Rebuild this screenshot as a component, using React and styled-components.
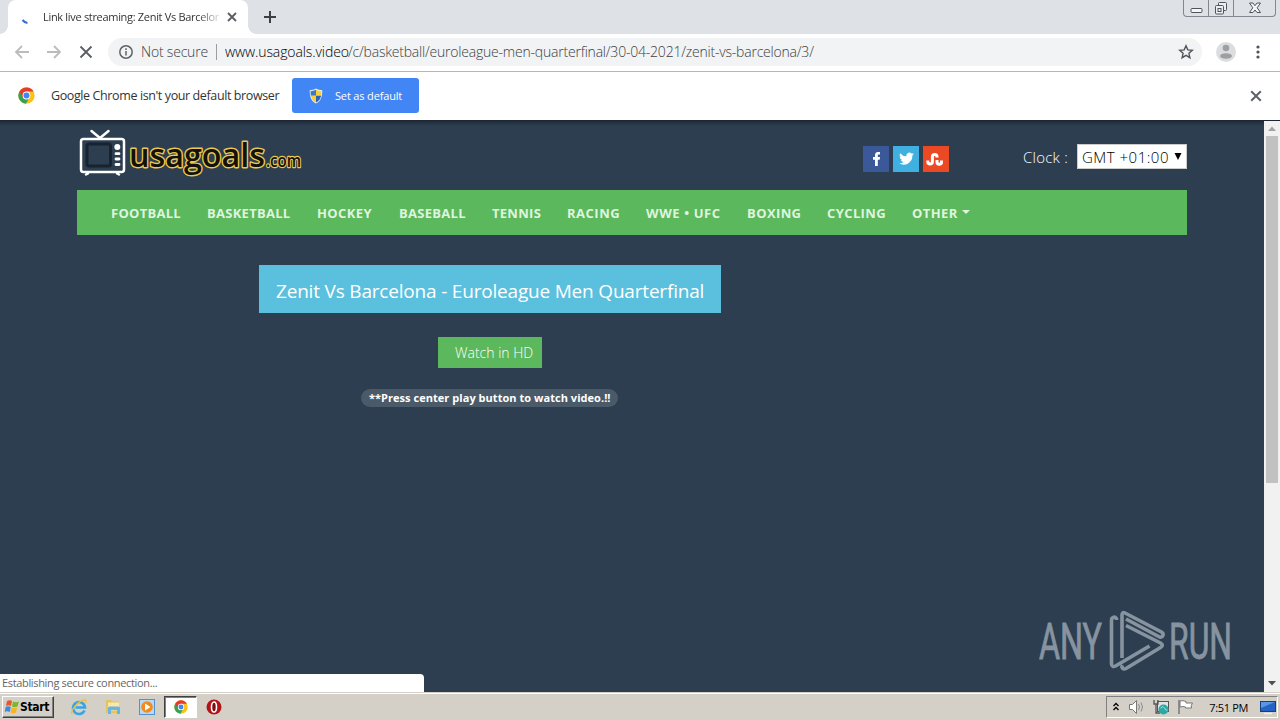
import React from "react";
import styled, { createGlobalStyle } from "styled-components";

const GlobalStyle = createGlobalStyle`
  * {
    box-sizing: border-box;
  }

  body {
    margin: 0;
    overflow: hidden;
    background: #2c3e50;
  }
`;

const Screen = styled.div`
  width: 1280px;
  height: 720px;
  display: flex;
  flex-direction: column;
  overflow: hidden;
  font-family: "Open Sans", "Noto Sans", sans-serif;
`;

const Text = styled.span`
  display: block;
  flex: none;
  white-space: nowrap;
  width: ${(props) => (props.$w ? `${props.$w}px` : "auto")};
  margin-left: ${(props) => props.$ml || 0}px;
  margin-right: ${(props) => props.$mr || 0}px;
  font-size: ${(props) => props.$size || 13}px;
  font-weight: ${(props) => props.$weight || 400};
  letter-spacing: ${(props) => props.$ls || 0}px;
  color: ${(props) => props.$color || "#333"};
`;

const TabStrip = styled.div`
  height: 34px;
  flex: none;
  display: flex;
  background: #dee1e6;
`;

const Tab = styled.div`
  position: relative;
  width: 240px;
  height: 34px;
  margin-left: 8px;
  padding: 0 11px 0 13px;
  display: flex;
  align-items: center;
  background: #fff;
  border-radius: 8px 8px 0 0;

  &::before,
  &::after {
    content: "";
    position: absolute;
    bottom: 0;
    width: 8px;
    height: 8px;
  }

  &::before {
    left: -8px;
    background: radial-gradient(circle at 0 0, transparent 7.5px, #fff 8px);
  }

  &::after {
    right: -8px;
    background: radial-gradient(circle at 100% 0, transparent 7.5px, #fff 8px);
  }
`;

const TabTitle = styled.div`
  width: 176px;
  margin: 0 8px 1px 14px;
  overflow: hidden;
  mask-image: linear-gradient(90deg, #000 155px, transparent 180px);
`;

const NewTab = styled.div`
  width: 44px;
  display: flex;
  align-items: center;
  justify-content: center;
`;

const WindowButtons = styled.div`
  height: 17px;
  margin: 0 4px 0 auto;
  display: flex;
  border: 1px solid #83878f;
  border-top: 0;
  border-radius: 0 0 4px 4px;
`;

const WindowButton = styled.div`
  width: ${(props) => props.$w}px;
  display: flex;
  align-items: center;
  justify-content: center;

  & + & {
    border-left: 1px solid #83878f;
  }
`;

const Toolbar = styled.div`
  height: 38px;
  flex: none;
  display: flex;
  align-items: center;
  padding: 0 20px 2px 14px;
  background: #fff;
  border-bottom: 1px solid #b4b6b9;
`;

const NavIcons = styled.div`
  display: flex;
  gap: 16px;
`;

const AddressBar = styled.div`
  width: 1094px;
  height: 28px;
  margin-left: 14px;
  padding: 0 8px 0 10px;
  display: flex;
  align-items: center;
  border-radius: 14px;
  background: #f1f3f4;
`;

const Separator = styled.div`
  width: 1px;
  height: 16px;
  margin: 0 8px;
  background: #9a9da1;
`;

const StarWrap = styled.div`
  margin-left: auto;
  display: flex;
`;

const ToolbarEnd = styled.div`
  margin-left: auto;
  display: flex;
  align-items: center;
  gap: 20px;
`;

const InfoBar = styled.div`
  height: 49px;
  flex: none;
  display: flex;
  align-items: center;
  padding: 0 18px 1px;
  background: #fff;
  border-bottom: 1px solid #1c2733;
`;

const DefaultButton = styled.div`
  width: 127px;
  height: 35px;
  margin-left: 13px;
  padding-left: 17px;
  display: flex;
  align-items: center;
  gap: 12px;
  border-radius: 3px;
  background: #4285f4;
`;

const CloseWrap = styled.div`
  margin: 1px 0 0 auto;
  display: flex;
`;

const Viewport = styled.div`
  position: relative;
  height: 571px;
  flex: none;
  display: flex;
`;

const Page = styled.div`
  flex: 1;
  padding: 0 77px;
  background: linear-gradient(#1f2c3a, #2c3e50 5px);
`;

const Header = styled.header`
  height: 69px;
  display: flex;
`;

const Socials = styled.div`
  display: flex;
  gap: 4px;
  margin: 25px 74px 0 auto;
`;

const Social = styled.div`
  width: 26px;
  height: 26px;
  display: flex;
  background: ${(props) => props.$bg};
`;

const Clock = styled.div`
  height: 25px;
  margin-top: 23px;
  display: flex;
  align-items: center;
`;

const Select = styled.div`
  width: 110px;
  height: 25px;
  padding: 0 4px;
  display: flex;
  align-items: center;
  justify-content: space-between;
  background: #fff;
  border: 1px solid #ccc;
`;

const NavBar = styled.nav`
  height: 45px;
  padding-left: 34px;
  display: flex;
  align-items: center;
  background: #5cb85c;
`;

const NavItem = styled.div`
  width: ${(props) => props.$w}px;
  margin-right: 26px;
  font-size: 13px;
  font-weight: 700;
  letter-spacing: ${(props) => props.$ls || 0.28}px;
  white-space: nowrap;
  color: #dff5df;
`;

const Caret = styled.span`
  display: inline-block;
  margin-left: 4px;
  vertical-align: 4px;
  border: 4px solid transparent;
  border-top-color: #dff5df;
  border-bottom: 0;
`;

const Content = styled.main`
  width: 826px;
  padding-top: 30px;
  display: flex;
  flex-direction: column;
  align-items: center;
`;

const Title = styled.h1`
  width: 462px;
  height: 48px;
  margin: 0 0 24px;
  padding: 4px 0 0 17px;
  display: flex;
  align-items: center;
  background: #5bc0de;
`;

const WatchButton = styled.div`
  width: 104px;
  height: 31px;
  margin-bottom: 21px;
  padding-left: 17px;
  display: flex;
  align-items: center;
  background: #5cb85c;
`;

const Hint = styled.div`
  width: 257px;
  height: 18px;
  margin-right: 1px;
  padding: 0 0 1px 8px;
  display: flex;
  align-items: center;
  border-radius: 9px;
  background: #4b5a69;
`;

const ScrollBar = styled.div`
  width: 16px;
  display: flex;
  flex-direction: column;
  align-items: center;
  background: #f1f1f1;
`;

const ScrollThumb = styled.div`
  width: 12px;
  height: 347px;
  margin-bottom: auto;
  background: #c1c1c1;
`;

const StatusBubble = styled.div`
  position: absolute;
  left: 0;
  bottom: 0;
  width: 424px;
  height: 18px;
  padding: 0 0 1px 2px;
  display: flex;
  align-items: center;
  background: #fff;
  border-radius: 0 4px 0 0;
`;

const Watermark = styled.svg`
  position: absolute;
  left: 1034px;
  top: 486px;
`;

const TaskBar = styled.div`
  flex: 1;
  display: flex;
  align-items: flex-start;
  padding: 3px 2px 0;
  background: #d4d0c8;
  border-top: 1px solid #d4d0c8;
  box-shadow: inset 0 1px 0 #fff;
`;

const StartButton = styled.div`
  width: 52px;
  height: 22px;
  padding-left: 1px;
  display: flex;
  align-items: center;
  border: 1px solid;
  border-color: #fff #404040 #404040 #fff;
  box-shadow: inset -1px -1px 0 #808080;
  font-family: "DejaVu Sans Condensed", "DejaVu Sans", sans-serif;
`;

const QuickLaunch = styled.div`
  display: flex;
  align-items: center;
  margin-left: 8px;
`;

const LaunchItem = styled.div`
  width: ${(props) => props.$w || 34}px;
  height: 22px;
  display: flex;
  align-items: center;
  justify-content: center;
  background: ${(props) => (props.$active ? "#fff" : "transparent")};
  border: ${(props) => (props.$active ? "1px solid" : "0")};
  border-color: #404040 #fff #fff #404040;
  box-shadow: ${(props) => (props.$active ? "inset 1px 1px 0 #808080" : "none")};
`;

const Tray = styled.div`
  width: 172px;
  height: 22px;
  margin-left: auto;
  padding: 0 1px 0 5px;
  display: flex;
  align-items: center;
  border: 1px solid;
  border-color: #808080 #fff #fff #808080;
`;

const TrayIcons = styled.div`
  display: flex;
  align-items: center;
  gap: 7px;
  margin-right: auto;
`;

const Cross = ({ size, color, stroke = 2 }) => (
  <svg width={size} height={size} viewBox="0 0 10 10">
    <path d="M1 1l8 8M9 1l-8 8" stroke={color} strokeWidth={stroke} fill="none" />
  </svg>
);

const Arrow = ({ flip }) => (
  <svg width="16" height="16" viewBox="0 0 16 16">
    <path
      d="M15 8H2M8 2L2 8l6 6"
      transform={flip ? "matrix(-1 0 0 1 16 0)" : undefined}
      stroke="#babcbe"
      strokeWidth="1.8"
      fill="none"
    />
  </svg>
);

const ChromeLogo = ({ size }) => (
  <svg width={size} height={size} viewBox="0 0 48 48">
    <circle cx="24" cy="24" r="23" fill="#fbc116" />
    <path d="M24 24L4.1 12.5A23 23 0 0 0 22 47l10-17z" fill="#34a353" />
    <path d="M4.1 12.5A23 23 0 0 1 43.9 13H24L14 29.5z" fill="#e33b2e" />
    <circle cx="24" cy="24" r="11" fill="#fff" />
    <circle cx="24" cy="24" r="8.5" fill="#4285f4" />
  </svg>
);

const Shield = () => (
  <svg width="14" height="16" viewBox="0 0 14 16">
    <path d="M7 .5c2 1.2 4 1.7 6.3 1.7 0 6-1 10.5-6.3 13.3C1.7 12.7.7 8.2.7 2.2 3 2.2 5 1.7 7 .5z" fill="#e8edf2" />
    <path d="M7 1.8v6H1.9C1.7 6.3 1.6 5 1.6 3.2 3.6 3.1 5.4 2.6 7 1.8z" fill="#3c78c8" />
    <path d="M7 1.8v6h5.1c.2-1.5.3-2.8.3-4.6C10.4 3.1 8.6 2.6 7 1.8z" fill="#f7d038" />
    <path d="M7 7.8v6.7c-3-1.6-4.5-3.7-5.1-6.7z" fill="#f7d038" />
    <path d="M7 7.8v6.7c3-1.6 4.5-3.7 5.1-6.7z" fill="#2d62b5" />
  </svg>
);

const SiteLogo = () => (
  <svg width="230" height="69" viewBox="77 121 230 69">
    <g fill="none" stroke="#fff" strokeWidth="2.5" strokeLinecap="round" strokeLinejoin="round">
      <path d="M91.5 131l8.5 7 8.5-7" />
      <rect x="81" y="139" width="43" height="33" rx="2.5" />
      <path d="M88 173.5l-2 1M117 173.5l2 1" />
    </g>
    <rect x="87" y="144" width="23.5" height="22" rx="2" fill="#2c3e50" stroke="#172331" strokeWidth="3" />
    <circle cx="117.3" cy="147" r="3" fill="#fff" />
    <path d="M116 153.7h3M116 159h3M116 164.5h3" stroke="#fff" strokeWidth="2.8" strokeLinecap="round" />
    <g
      fill="#141208"
      stroke="#edc94f"
      strokeWidth="2.8"
      strokeLinejoin="round"
      paintOrder="stroke"
      fontFamily="Open Sans, Noto Sans, sans-serif"
      fontWeight="600"
    >
      <text x="129" y="167" fontSize="33" textLength="136" lengthAdjust="spacingAndGlyphs">usagoals</text>
      <text x="266" y="167" fontSize="18" strokeWidth="2.4" textLength="35" lengthAdjust="spacingAndGlyphs">.com</text>
    </g>
  </svg>
);

const navItems = [
  { label: "FOOTBALL", width: 70 },
  { label: "BASKETBALL", width: 84 },
  { label: "HOCKEY", width: 56, ls: 0.4 },
  { label: "BASEBALL", width: 67 },
  { label: "TENNIS", width: 49 },
  { label: "RACING", width: 53, ls: 0.5 },
  { label: "WWE • UFC", width: 75, ls: 0.6 },
  { label: "BOXING", width: 54, ls: 0.4 },
  { label: "CYCLING", width: 59, ls: 0.4 },
  { label: "OTHER", width: 60, ls: 0.4, caret: true },
];

const BrowserTop = () => (
  <>
    <TabStrip>
      <Tab>
        <svg width="8" height="16" viewBox="0 0 8 16">
          <path d="M1.5 11q2 2.500 5 3" stroke="#3b6fd0" strokeWidth="2.2" fill="none" />
        </svg>
        <TabTitle>
          <Text $size={11} $ls={-0.31}>Link live streaming: Zenit Vs Barcelona</Text>
        </TabTitle>
        <Cross size={10} color="#5a5d61" stroke={1.8} />
      </Tab>
      <NewTab>
        <svg width="12" height="12" viewBox="0 0 12 12">
          <path d="M6 0v12M0 6h12" stroke="#3c4043" strokeWidth="2" />
        </svg>
      </NewTab>
      <WindowButtons>
        <WindowButton $w={24}>
          <svg width="13" height="17" viewBox="0 0 13 17">
            <rect x="1" y="8.5" width="11" height="4" rx="1" fill="#f5f6f8" stroke="#50545c" />
          </svg>
        </WindowButton>
        <WindowButton $w={25}>
          <svg width="14" height="17" viewBox="0 0 14 17">
            <g fill="#eceef1" stroke="#50545c">
              <rect x="4.5" y="2.5" width="8" height="8" rx="1" />
              <rect x="1.5" y="5.5" width="8" height="8.5" rx="1" />
              <rect x="4" y="8.5" width="3" height="3" />
            </g>
          </svg>
        </WindowButton>
        <WindowButton $w={42}>
          <svg width="14" height="17" viewBox="0 0 14 17">
            <path
              d="M1.5 3H5l2 2.700L9 3h3.500L9.200 7.800l3.300 4.700H9L7 10l-2 2.500H1.500l3.300-4.700z"
              fill="#f5f6f8"
              stroke="#50545c"
            />
          </svg>
        </WindowButton>
      </WindowButtons>
    </TabStrip>
    <Toolbar>
      <NavIcons>
        <Arrow />
        <Arrow flip />
        <svg width="16" height="16" viewBox="0 0 16 16">
          <path d="M2.5 2.5l11 11M13.5 2.5l-11 11" stroke="#5a5d61" strokeWidth="1.8" />
        </svg>
      </NavIcons>
      <AddressBar>
        <svg width="16" height="16" viewBox="0 0 16 16">
          <circle cx="8" cy="8" r="6.2" fill="none" stroke="#5f6368" strokeWidth="1.5" />
          <path d="M8 7v4.500M8 4.300v1.600" stroke="#5f6368" strokeWidth="1.5" />
        </svg>
        <Text $size={14} $weight={300} $color="#3c4043" $w={67} $ml={7} $ls={-0.2}>Not secure</Text>
        <Separator />
        <Text $size={14} $weight={300} $color="#000" $w={123} $ls={-0.1}>www.usagoals.video</Text>
        <Text $size={14} $weight={300} $color="#3c4043" $ls={-0.21}>
          /c/basketball/euroleague-men-quarterfinal/30-04-2021/zenit-vs-barcelona/3/
        </Text>
        <StarWrap>
          <svg width="16" height="16" viewBox="0 0 16 16">
            <path
              d="M8 1.8l1.8 4.1 4.5.4-3.4 3 1 4.4L8 11.400l-3.900 2.300 1-4.400-3.400-3 4.500-.4z"
              fill="none"
              stroke="#50545a"
              strokeWidth="1.4"
            />
          </svg>
        </StarWrap>
      </AddressBar>
      <ToolbarEnd>
        <svg width="20" height="20" viewBox="0 0 20 20">
          <circle cx="10" cy="10" r="10" fill="#dcdddf" />
          <circle cx="10" cy="6" r="3.3" fill="#9d9fa2" />
          <ellipse cx="10" cy="14" rx="6" ry="2.8" fill="#9d9fa2" />
        </svg>
        <svg width="4" height="16" viewBox="0 0 4 16">
          <g fill="#505358">
            <circle cx="2" cy="3" r="1.6" />
            <circle cx="2" cy="8" r="1.6" />
            <circle cx="2" cy="13" r="1.6" />
          </g>
        </svg>
      </ToolbarEnd>
    </Toolbar>
    <InfoBar>
      <ChromeLogo size={17} />
      <Text $size={12.5} $w={228} $ml={16} $ls={-0.39}>Google Chrome isn't your default browser</Text>
      <DefaultButton>
        <Shield />
        <Text $size={11} $color="#fff" $ls={-0.16}>Set as default</Text>
      </DefaultButton>
      <CloseWrap>
        <Cross size={12} color="#5f6368" stroke={1.7} />
      </CloseWrap>
    </InfoBar>
  </>
);

const SitePage = () => (
  <Page>
    <Header>
      <SiteLogo />
      <Socials>
        <Social $bg="#3b5998">
          <svg width="26" height="26" viewBox="0 0 26 26">
            <path d="M12 20v-6.300H10V11h2V9.200C12 6.800 13.200 6 15 6h2v2.500h-1.400c-.7 0-.8.400-.8 1V11h2.200l-.3 2.700h-1.900V20z" fill="#fff" />
          </svg>
        </Social>
        <Social $bg="#3fb0e0">
          <svg width="26" height="26" viewBox="0 0 26 26">
            <path
              transform="translate(5.500 5) scale(.67)"
              d="M23 4.600a9 9 0 0 1-2.600.7 4.500 4.500 0 0 0 2-2.500 9 9 0 0 1-2.900 1.100 4.500 4.500 0 0 0-7.700 4.100A12.800 12.800 0 0 1 2.500 3.300a4.500 4.500 0 0 0 1.400 6 4.500 4.500 0 0 1-2-.6c0 2.200 1.500 4.100 3.600 4.500a4.500 4.500 0 0 1-2 .1 4.500 4.500 0 0 0 4.200 3.100A9 9 0 0 1 1 18.300a12.800 12.800 0 0 0 19.700-11.400A9 9 0 0 0 23 4.600z"
              fill="#fff"
            />
          </svg>
        </Social>
        <Social $bg="#eb4924">
          <svg width="26" height="26" viewBox="0 0 26 26">
            <path
              d="M4.8 14.500v1.300a2.300 2.300 0 0 0 4.600 0v-5a2.300 2.300 0 0 1 4.600 0v.7M14 14v2a2.200 2.200 0 0 0 4.500 0v-1.500"
              fill="none"
              stroke="#fff"
              strokeWidth="3"
            />
          </svg>
        </Social>
      </Socials>
      <Clock>
        <Text $size={15} $weight={300} $color="#fff" $w={54} $ls={0.25}>Clock :</Text>
        <Select>
          <Text $size={15} $color="#000" $weight={300} $ls={0.5}>GMT +01:00</Text>
          <svg width="8" height="8" viewBox="0 0 8 8">
            <path d="M.5 0h7L4 7z" fill="#000" />
          </svg>
        </Select>
      </Clock>
    </Header>
    <NavBar>
      {navItems.map((item) => (
        <NavItem key={item.label} $w={item.width} $ls={item.ls}>
          {item.label}
          {item.caret && <Caret />}
        </NavItem>
      ))}
    </NavBar>
    <Content>
      <Title>
        <Text $size={19} $color="#fff" $ls={-0.19}>Zenit Vs Barcelona - Euroleague Men Quarterfinal</Text>
      </Title>
      <WatchButton>
        <Text $size={14} $color="#fff" $weight={300}>Watch in HD</Text>
      </WatchButton>
      <Hint>
        <Text $size={11} $color="#fff" $weight={700} $ls={0.04}>**Press center play button to watch video.!!</Text>
      </Hint>
    </Content>
  </Page>
);

const AnyRun = () => (
  <Watermark width="204" height="66" viewBox="1034 607 204 66">
    <g
      fill="#8794a0"
      stroke="#8794a0"
      strokeWidth="0.9"
      fontFamily="Roboto, sans-serif"
      fontSize="50"
    >
      <text x="1039" y="659" textLength="63" lengthAdjust="spacingAndGlyphs">ANY</text>
      <text x="1169" y="659" textLength="63" lengthAdjust="spacingAndGlyphs">RUN</text>
    </g>
    <g fill="none" stroke="#8794a0" strokeWidth="3.6" strokeLinejoin="round">
      <path d="M1116.5 620v-1.500c-2-2.500-5-1-5 2V664c0 2.500 2 3 4 2l34-20" />
      <path d="M1122 658v-43c0-2 1-3 3-2l36.500 19c3 2 1.500 6-2 5L1126 619" />
      <path d="M1126 625.500l34.500 17.500c2.500 1.500 2.500 3 0 4.500L1126 668.500c-3 1.500-5-1-3.500-3.500" />
    </g>
  </Watermark>
);

const SystemBar = () => (
  <TaskBar>
    <StartButton>
      <svg width="16" height="16" viewBox="0 0 16 16">
        <path d="M3 2q3-1.500 5 0L7 7q-2.500-1.500-5 0z" fill="#e8562a" />
        <path d="M9 2.500q3 1.500 6 0L13.500 7.500q-3 1.500-5.500 0z" fill="#7db728" />
        <path d="M1.7 8q2.500-1.500 5 0l-1 5q-3-1.500-5 0z" fill="#3c8ad8" />
        <path d="M7.7 8.500q2.500 1.500 5.500 0l-1.200 5q-2.500 1.500-5.500 0z" fill="#f6b420" />
      </svg>
      <Text $size={12} $weight={700} $color="#000" $ls={-0.3}>Start</Text>
    </StartButton>
    <QuickLaunch>
      <LaunchItem>
        <svg width="18" height="18" viewBox="0 0 18 18">
          <path d="M14.5 12.500A6 6 0 1 1 15 9.500H5.500" fill="none" stroke="#38a5e3" strokeWidth="2.6" />
          <path d="M2.5 16C-1.500 15 8 2.500 14.500 2c2-.1 2 1.500 1.200 3" fill="none" stroke="#ecc23c" strokeWidth="1.3" />
        </svg>
      </LaunchItem>
      <LaunchItem>
        <svg width="16" height="16" viewBox="0 0 16 16">
          <path d="M1 1h5l1 1.500h7V14H1z" fill="#e3c462" />
          <path d="M3 3.500h11v8H3z" fill="#f8e9a8" />
          <path d="M3 9q0-1.500 1.500-1.500h9Q15 7.500 15 9v6h-3v-4H6v4H3z" fill="#68b4e4" />
        </svg>
      </LaunchItem>
      <LaunchItem>
        <svg width="16" height="16" viewBox="0 0 16 16">
          <rect x=".5" y=".5" width="15" height="15" fill="#b6d9f5" stroke="#4f93cf" />
          <circle cx="8" cy="8" r="5.8" fill="#f28a1c" />
          <path d="M6 4.500L11.500 8 6 11.500z" fill="#fff" />
        </svg>
      </LaunchItem>
      <LaunchItem $active $w={33}>
        <ChromeLogo size={14} />
      </LaunchItem>
      <LaunchItem>
        <svg width="16" height="16" viewBox="0 0 16 16">
          <circle cx="8" cy="8" r="7.5" fill="#b31217" />
          <ellipse cx="8" cy="8" rx="2.5" ry="5" fill="#7e0b0f" stroke="#fff" strokeWidth="1.6" />
        </svg>
      </LaunchItem>
    </QuickLaunch>
    <Tray>
      <TrayIcons>
        <svg width="8" height="10" viewBox="0 0 8 10">
          <path d="M1.5 4L4 1.500 6.500 4M1.500 8L4 5.500 6.500 8" stroke="#000" strokeWidth="1.3" fill="none" />
        </svg>
        <svg width="19" height="16" viewBox="-1 0 19 16">
          <path d="M1.5 5.500h3l4-4v13l-4-4h-3z" fill="#fff" stroke="#777" />
          <path d="M10.5 5q2 3 0 6M13 3.500q3 4.500 0 9" fill="none" stroke="#8a8a8a" />
        </svg>
        <svg width="17" height="16" viewBox="0 0 17 16">
          <rect x="4.5" y="2.5" width="11" height="10" fill="#dfe4e8" stroke="#555" />
          <path d="M1 1v4h4V1M3 5v9h4" fill="none" stroke="#555" strokeWidth="1.3" />
          <circle cx="10.5" cy="10.5" r="5" fill="#2ba7a5" />
          <path d="M7.5 9q3-3 4 0t3 2" stroke="#9ce0c8" fill="none" />
        </svg>
        <svg width="17" height="16" viewBox="0 0 17 16">
          <path d="M2 1v14" stroke="#777" strokeWidth="1.5" />
          <path d="M3 2q3-1 6 .5v1.500h6.500q-2 2.500-1 5H8.500V8Q6 7 3 8z" fill="#fff" stroke="#777" />
        </svg>
      </TrayIcons>
      <Text $size={11} $color="#000" $ls={-0.35} $mr={12}>7:51 PM</Text>
      <svg width="16" height="16" viewBox="0 0 16 16">
        <rect x=".5" y="2.5" width="15" height="10" fill="#2462c4" stroke="#173f7d" />
        <path d="M1 3h14L1 9z" fill="#5a96e6" />
        <path d="M4 14.500h8" stroke="#eee" strokeWidth="1.5" />
      </svg>
    </Tray>
  </TaskBar>
);

const App = () => {
  return (
    <Screen>
      <GlobalStyle />
      <BrowserTop />
      <Viewport>
        <SitePage />
        <ScrollBar>
          <svg width="16" height="15" viewBox="0 0 16 15">
            <path d="M4 10l4-4.500 4 4.500z" fill="#a3a3a3" />
          </svg>
          <ScrollThumb />
          <svg width="16" height="17" viewBox="0 0 16 17">
            <path d="M4 6l4 4.500L12 6z" fill="#505050" />
          </svg>
        </ScrollBar>
        <StatusBubble>
          <Text $size={11} $color="#666" $ls={-0.34}>Establishing secure connection...</Text>
        </StatusBubble>
        <AnyRun />
      </Viewport>
      <SystemBar />
    </Screen>
  );
};

export default App;
